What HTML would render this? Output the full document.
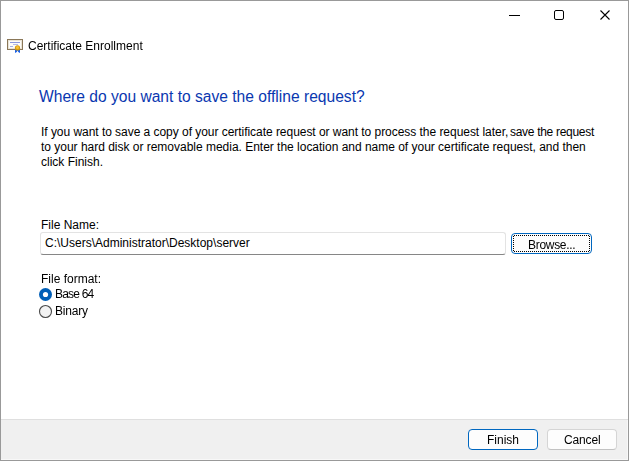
<!DOCTYPE html>
<html><head><meta charset="utf-8">
<style>
*{margin:0;padding:0;box-sizing:border-box}
html,body{width:629px;height:461px;overflow:hidden;background:#fff}
body{font-family:"Liberation Sans",sans-serif;font-size:12px;color:#000;position:relative}
.abs{position:absolute;white-space:nowrap}
.t{position:absolute;white-space:nowrap;line-height:15px;height:15px}
</style></head><body>
  <!-- footer -->
  <div class="abs" style="left:0;top:419px;width:629px;height:1px;background:#dfdfdf"></div>
  <div class="abs" style="left:0;top:420px;width:629px;height:41px;background:#f0f0f0"></div>
  <div class="abs" style="left:627px;top:420px;width:1px;height:40px;background:#f8f8f8"></div>
  <div class="abs" style="left:1px;top:459px;width:627px;height:1px;background:#f8f8f8"></div>

  <!-- window controls -->
  <svg class="abs" style="left:0;top:0" width="629" height="30">
    <line x1="509" y1="15.5" x2="520" y2="15.5" stroke="#000" stroke-width="1"/>
    <rect x="554.5" y="10.5" width="9" height="9" rx="1.5" fill="none" stroke="#000" stroke-width="1"/>
    <path d="M600.5 10.5 L609.5 19.5 M609.5 10.5 L600.5 19.5" stroke="#000" stroke-width="1.1"/>
  </svg>

  <!-- cert icon -->
  <svg class="abs" style="left:0;top:30px" width="30" height="30">
    <rect x="7.5" y="9.5" width="15" height="10" fill="#fdfcf8" stroke="#8a7758" stroke-width="1"/>
    <rect x="8.5" y="10.5" width="13" height="8" fill="none" stroke="#e9e3d6" stroke-width="1"/>
    <line x1="10" y1="12.5" x2="20" y2="12.5" stroke="#8c98dc"/>
    <line x1="13" y1="14.5" x2="18" y2="14.5" stroke="#b4bce8"/>
    <line x1="10" y1="16.5" x2="13" y2="16.5" stroke="#a6b0e4"/>
    <path d="M15 19 L15 23 L16.8 22 L17.5 20.5 L18.2 22 L20 23 L20 19Z" fill="#1a62ea"/>
    <circle cx="17.5" cy="17.9" r="2.6" fill="#d99b08"/>
    <circle cx="17.5" cy="17.6" r="1.5" fill="#f3c23a"/>
  </svg>
  <div class="t" style="left:28px;top:39px;width:130px;will-change:transform">Certificate Enrollment</div>

  <div class="t" style="left:39px;top:87.5px;font-size:15.6px;line-height:18px;height:18px;color:#0a37b0">Where do you want to save the offline request?</div>

  <div class="t" style="left:41px;top:125px;letter-spacing:-0.04px">If you want to save a copy of your certificate request or want to process the request later,</div>
  <div class="t" style="left:510px;top:125px;letter-spacing:-0.3px">save the request</div>
  <div class="t" style="left:41px;top:140px;letter-spacing:-0.015px">to your hard disk or removable media. Enter the location and name of your certificate request, and then</div>
  <div class="t" style="left:41px;top:155px">click Finish.</div>

  <div class="t" style="left:41px;top:218px">File Name:</div>
  <div class="abs" style="left:40px;top:232px;width:466px;height:23px;border:1px solid #e3e3e3;border-bottom:1px solid #868686;border-radius:3px;background:#fff"></div>
  <div class="t" style="left:45px;top:236px">C:\Users\Administrator\Desktop\server</div>

  <div class="abs" style="left:511px;top:233px;width:81px;height:21px;border:1px solid #0067c0;border-radius:4px;background:#fdfdfd"></div>
  <svg class="abs" style="left:0;top:0" width="629" height="300" shape-rendering="crispEdges"><path d="M514 235h1v1h-1zM514 251h1v1h-1zM516 235h1v1h-1zM516 251h1v1h-1zM518 235h1v1h-1zM518 251h1v1h-1zM520 235h1v1h-1zM520 251h1v1h-1zM522 235h1v1h-1zM522 251h1v1h-1zM524 235h1v1h-1zM524 251h1v1h-1zM526 235h1v1h-1zM526 251h1v1h-1zM528 235h1v1h-1zM528 251h1v1h-1zM530 235h1v1h-1zM530 251h1v1h-1zM532 235h1v1h-1zM532 251h1v1h-1zM534 235h1v1h-1zM534 251h1v1h-1zM536 235h1v1h-1zM536 251h1v1h-1zM538 235h1v1h-1zM538 251h1v1h-1zM540 235h1v1h-1zM540 251h1v1h-1zM542 235h1v1h-1zM542 251h1v1h-1zM544 235h1v1h-1zM544 251h1v1h-1zM546 235h1v1h-1zM546 251h1v1h-1zM548 235h1v1h-1zM548 251h1v1h-1zM550 235h1v1h-1zM550 251h1v1h-1zM552 235h1v1h-1zM552 251h1v1h-1zM554 235h1v1h-1zM554 251h1v1h-1zM556 235h1v1h-1zM556 251h1v1h-1zM558 235h1v1h-1zM558 251h1v1h-1zM560 235h1v1h-1zM560 251h1v1h-1zM562 235h1v1h-1zM562 251h1v1h-1zM564 235h1v1h-1zM564 251h1v1h-1zM566 235h1v1h-1zM566 251h1v1h-1zM568 235h1v1h-1zM568 251h1v1h-1zM570 235h1v1h-1zM570 251h1v1h-1zM572 235h1v1h-1zM572 251h1v1h-1zM574 235h1v1h-1zM574 251h1v1h-1zM576 235h1v1h-1zM576 251h1v1h-1zM578 235h1v1h-1zM578 251h1v1h-1zM580 235h1v1h-1zM580 251h1v1h-1zM582 235h1v1h-1zM582 251h1v1h-1zM584 235h1v1h-1zM584 251h1v1h-1zM586 235h1v1h-1zM586 251h1v1h-1zM588 235h1v1h-1zM588 251h1v1h-1zM513 236h1v1h-1zM589 236h1v1h-1zM513 238h1v1h-1zM589 238h1v1h-1zM513 240h1v1h-1zM589 240h1v1h-1zM513 242h1v1h-1zM589 242h1v1h-1zM513 244h1v1h-1zM589 244h1v1h-1zM513 246h1v1h-1zM589 246h1v1h-1zM513 248h1v1h-1zM589 248h1v1h-1zM513 250h1v1h-1zM589 250h1v1h-1z" fill="#000"/></svg>
  <div class="t" style="left:528px;top:238px;letter-spacing:-0.3px">Browse...</div>

  <div class="t" style="left:41px;top:272px">File format:</div>
  <svg class="abs" style="left:38px;top:287px" width="16" height="34">
    <circle cx="7.5" cy="7.5" r="6.5" fill="#005fb8"/>
    <circle cx="7.5" cy="7.5" r="2.6" fill="#fff"/>
    <circle cx="7.5" cy="24.5" r="6" fill="#f3f3f3" stroke="#4a4a4a" stroke-width="1.1"/>
  </svg>
  <div class="t" style="left:55px;top:287px;letter-spacing:-0.8px">Base 64</div>
  <div class="t" style="left:55px;top:304px;letter-spacing:-0.2px">Binary</div>

  <div class="abs" style="left:468px;top:429px;width:70px;height:21px;border:1px solid #0067c0;border-radius:4px;background:#fdfdfd"></div>
  <div class="t" style="left:487px;top:433px">Finish</div>
  <div class="abs" style="left:547px;top:429px;width:70px;height:21px;border:1px solid #d5d5d5;border-bottom-color:#c2c2c2;border-radius:4px;background:#fdfdfd"></div>
  <div class="t" style="left:564px;top:433px;letter-spacing:-0.15px">Cancel</div>

  <!-- window border -->
  <div class="abs" style="left:0;top:0;width:629px;height:461px;border:1px solid #999"></div>
</body></html>
